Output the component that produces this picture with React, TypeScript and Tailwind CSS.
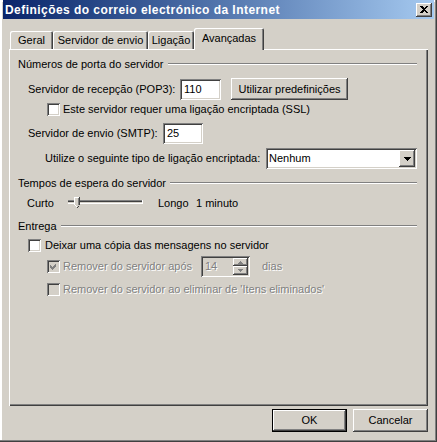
import React from 'react';

const raised =
  'bg-[#d4d0c8] shadow-[inset_-1px_-1px_#404040,inset_1px_1px_#ffffff,inset_-2px_-2px_#808080,inset_2px_2px_#d4d0c8]';
const sunken =
  'shadow-[inset_1px_1px_#808080,inset_-1px_-1px_#ffffff,inset_2px_2px_#404040,inset_-2px_-2px_#d4d0c8]';
const disabledText = 'text-[#808080] [text-shadow:1px_1px_0_#ffffff]';

function GroupHeader({ label }: { label: string }) {
  return (
    <div className="flex items-center h-[16px] pl-[9px] pr-[11px]">
      <span>{label}</span>
      <div className="flex-1 ml-[4px] border-t border-t-[#808080] border-b border-b-white" />
    </div>
  );
}

function Checkbox({ checked = false, disabled = false }: { checked?: boolean; disabled?: boolean }) {
  return (
    <div
      className={`w-[13px] h-[13px] shrink-0 flex items-center justify-center ${sunken} ${
        disabled ? 'bg-[#d4d0c8]' : 'bg-white'
      }`}
    >
      {checked && (
        <svg width="7" height="7" viewBox="0 0 7 7" shapeRendering="crispEdges">
          <path d="M0 2 L2 4 L6 0 L6 3 L2 7 L0 5 Z" fill={disabled ? '#808080' : '#000'} />
        </svg>
      )}
    </div>
  );
}

function clsxLite(...parts: (string | false | undefined)[]) {
  return parts.filter(Boolean).join(' ');
}

function Tab({ label, width, selected = false }: { label: string; width: string; selected?: boolean }) {
  return (
    <div
      className={clsxLite(
        'flex items-center justify-center bg-[#d4d0c8] rounded-t-[2px]',
        'shadow-[inset_1px_1px_#ffffff,inset_-1px_0_#404040,inset_-2px_0_#808080]',
        width,
        selected ? 'h-[22px] -mb-px relative z-10 pb-[2px]' : 'h-[18px]'
      )}
    >
      {label}
    </div>
  );
}

function TextField({ value, width }: { value: string; width: string }) {
  return (
    <div className={`h-[21px] ${width} bg-white ${sunken} flex items-center pl-[4px]`}>{value}</div>
  );
}

function Button({ label, width, isDefault = false }: { label: string; width: string; isDefault?: boolean }) {
  return (
    <div
      className={clsxLite(
        'h-[23px] flex items-center justify-center',
        width,
        isDefault
          ? 'bg-[#d4d0c8] shadow-[inset_0_0_0_1px_#000000,inset_-2px_-2px_#404040,inset_2px_2px_#ffffff,inset_-3px_-3px_#808080]'
          : raised
      )}
    >
      {label}
    </div>
  );
}

export default function App() {
  return (
    <div className="w-[437px] h-[442px] bg-[#d4d0c8] flex flex-col font-['Liberation_Sans',Arial,sans-serif] text-[11px] text-black leading-none shadow-[inset_-1px_-1px_#404040,inset_-2px_-2px_#808080,inset_2px_2px_#ffffff]">
      {/* title bar */}
      <div className="mx-[3px] h-[19px] flex items-center justify-between pl-[2px] pr-[2px] bg-gradient-to-r from-[#0a246a] to-[#a6caf0]">
        <span className="font-bold text-white text-[12px] tracking-[0.45px]">
          Definições do correio electrónico da Internet
        </span>
        <div className={`w-[16px] h-[14px] flex items-center justify-center ${raised}`}>
          <svg width="8" height="7" viewBox="0 0 8 7" shapeRendering="crispEdges">
            <path d="M0 0h2l2 2 2-2h2v1L5 3.5 8 6v1H6L4 5 2 7H0V6l3-2.5L0 1z" fill="#000" />
          </svg>
        </div>
      </div>

      {/* tabs */}
      <div className="mt-[9px] ml-[10px] flex items-end h-[21px]">
        <Tab label="Geral" width="w-[43px]" />
        <Tab label="Servidor de envio" width="w-[95px]" />
        <Tab label="Ligação" width="w-[46px]" />
        <Tab label="Avançadas" width="w-[70px]" selected />
      </div>

      {/* panel */}
      <div className="ml-[9px] w-[419px] h-[357px] flex flex-col shadow-[inset_1px_1px_#ffffff,inset_-1px_-1px_#404040,inset_-2px_-2px_#808080]">
        <div className="mt-[7px]">
          <GroupHeader label="Números de porta do servidor" />
        </div>

        <div className="mt-[6px] h-[22px] flex items-center pl-[19px]">
          <span className="w-[152px]">Servidor de recepção (POP3):</span>
          <TextField value="110" width="w-[41px]" />
          <div className="ml-[10px]">
            <div className={`h-[22px] w-[117px] flex items-center justify-center ${raised}`}>
              Utilizar predefinições
            </div>
          </div>
        </div>

        <div className="h-[19px] flex items-center pl-[38px]">
          <Checkbox />
          <span className="ml-[3px]">Este servidor requer uma ligação encriptada (SSL)</span>
        </div>

        <div className="mt-[3px] h-[22px] flex items-center pl-[19px]">
          <span className="w-[135px]">Servidor de envio (SMTP):</span>
          <TextField value="25" width="w-[40px]" />
        </div>

        <div className="mt-[4px] h-[21px] flex items-center pl-[36px]">
          <span className="w-[221px]">Utilize o seguinte tipo de ligação encriptada:</span>
          <div className={`h-[21px] w-[151px] bg-white ${sunken} flex items-center justify-between pl-[3px] pr-[2px]`}>
            <span>Nenhum</span>
            <div className={`w-[16px] h-[17px] flex items-center justify-center ${raised}`}>
              <svg width="7" height="4" viewBox="0 0 7 4" shapeRendering="crispEdges">
                <path d="M0 0h7L3.5 4z" fill="#000" />
              </svg>
            </div>
          </div>
        </div>

        <div className="mt-[6px]">
          <GroupHeader label="Tempos de espera do servidor" />
        </div>

        <div className="mt-[3px] h-[18px] flex items-center pl-[18px]">
          <span className="w-[41px]">Curto</span>
          <svg width="75" height="12" viewBox="0 0 75 12" shapeRendering="crispEdges">
            <rect x="0" y="3" width="75" height="1" fill="#808080" />
            <rect x="0" y="4" width="75" height="1" fill="#404040" />
            <rect x="0" y="5" width="75" height="1" fill="#d4d0c8" />
            <rect x="0" y="6" width="75" height="1" fill="#ffffff" />
            <rect x="74" y="3" width="1" height="4" fill="#ffffff" />
            <path d="M6 0h6v8l-3 3-3-3z" fill="#d4d0c8" />
            <rect x="6" y="0" width="5" height="1" fill="#ffffff" />
            <rect x="6" y="0" width="1" height="8" fill="#ffffff" />
            <rect x="11" y="0" width="1" height="8" fill="#404040" />
            <rect x="10" y="1" width="1" height="7" fill="#808080" />
            <rect x="7" y="8" width="1" height="1" fill="#ffffff" />
            <rect x="8" y="9" width="1" height="1" fill="#ffffff" />
            <rect x="10" y="9" width="1" height="1" fill="#404040" />
            <rect x="9" y="10" width="1" height="1" fill="#404040" />
          </svg>
          <span className="ml-[15px] w-[38px]">Longo</span>
          <span>1 minuto</span>
        </div>

        <div className="mt-[6px]">
          <GroupHeader label="Entrega" />
        </div>

        <div className="mt-[3px] h-[16px] flex items-center pl-[19px]">
          <Checkbox />
          <span className="ml-[4px]">Deixar uma cópia das mensagens no servidor</span>
        </div>

        <div className="mt-[3px] h-[21px] flex items-center pl-[38px]">
          <Checkbox checked disabled />
          <span className={`ml-[3px] w-[138px] ${disabledText}`}>Remover do servidor após</span>
          <div className={`h-[21px] w-[49px] bg-[#d4d0c8] ${sunken} flex items-center justify-between pl-[4px] pr-[2px]`}>
            <span className={disabledText}>14</span>
            <div className="flex flex-col">
              <div className={`w-[15px] h-[8px] flex items-center justify-center ${raised}`}>
                <svg width="5" height="3" viewBox="0 0 5 3" shapeRendering="crispEdges">
                  <path d="M2 0h1v1h1v1h1v1H0V2h1V1h1z" fill="#808080" />
                </svg>
              </div>
              <div className={`w-[15px] h-[9px] flex items-center justify-center ${raised}`}>
                <svg width="5" height="3" viewBox="0 0 5 3" shapeRendering="crispEdges">
                  <path d="M0 0h5v1H4v1H3v1H2V2H1V1H0z" fill="#808080" />
                </svg>
              </div>
            </div>
          </div>
          <span className={`ml-[12px] ${disabledText}`}>dias</span>
        </div>

        <div className="mt-[4px] h-[16px] flex items-center pl-[38px]">
          <Checkbox disabled />
          <span className={`ml-[3px] ${disabledText}`}>
            Remover do servidor ao eliminar de 'Itens eliminados'
          </span>
        </div>
      </div>

      {/* dialog buttons */}
      <div className="mt-[3px] flex justify-end gap-[6px] pr-[9px]">
        <Button label="OK" width="w-[75px]" isDefault />
        <Button label="Cancelar" width="w-[75px]" />
      </div>
    </div>
  );
}
